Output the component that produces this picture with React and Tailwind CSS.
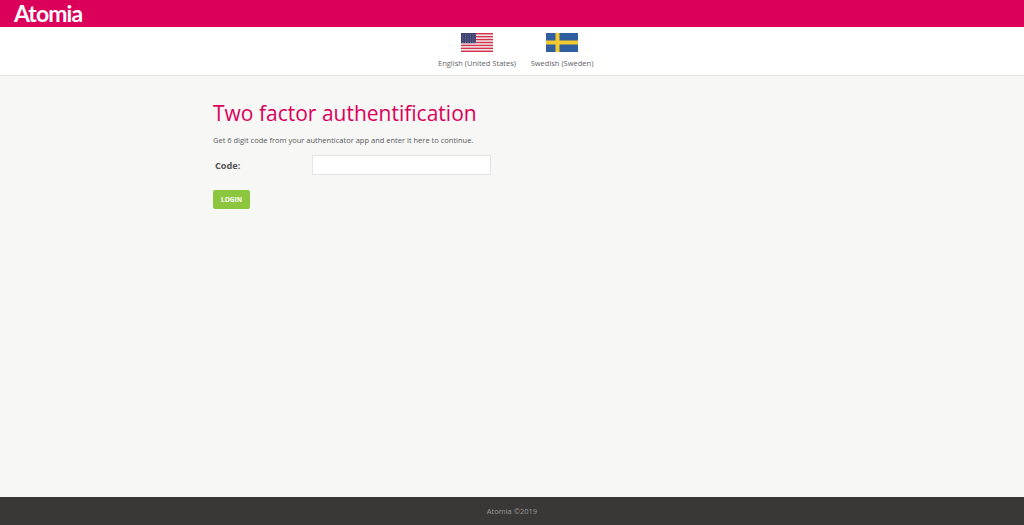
const sans = { fontFamily: '"Open Sans", sans-serif' };

function UsFlag() {
  const stripes = [0, 2, 4, 6, 8, 10, 12];
  return (
    <svg width="32" height="19" viewBox="0 0 32 19" className="block">
      <rect width="32" height="19" fill="#f3f3f5" />
      {stripes.map((i) => (
        <rect key={i} y={(i * 19) / 13} width="32" height={19 / 13} fill="#d2324a" />
      ))}
      <rect width="15" height="10.2" fill="#3b3f6e" />
      {[1.5, 3.5, 5.5, 7.5, 9].map((y) =>
        [1.5, 4, 6.5, 9, 11.5, 13.7].map((x) => (
          <rect key={`${x}-${y}`} x={x} y={y} width="0.8" height="0.8" fill="#9ea1bd" />
        ))
      )}
    </svg>
  );
}

function SeFlag() {
  return (
    <svg width="32" height="19" viewBox="0 0 32 19" className="block">
      <rect width="32" height="19" fill="#2f5f9e" />
      <rect x="9.5" width="4" height="19" fill="#f4c92f" />
      <rect y="7.5" width="32" height="4" fill="#f4c92f" />
    </svg>
  );
}

export default function App() {
  return (
    <div className="h-[525px] flex flex-col bg-[#f7f7f6] text-[#555]" style={sans}>
      <header className="h-[27px] bg-[#db005a] pl-[14px] flex items-center">
        <span
          className="text-white text-[23px] font-bold leading-none tracking-[-0.9px]"
          style={{ fontFamily: '"Lato", sans-serif' }}
        >
          Atomia
        </span>
      </header>

      <nav className="h-[49px] bg-white border-b border-[#e6e6e6] flex justify-center gap-[15px] pt-[6px] pl-[7px]">
        <a className="flex flex-col items-center w-[78px] text-[7.5px] leading-[11px] text-[#5f6368] whitespace-nowrap">
          <UsFlag />
          <span className="mt-[6px]">English (United States)</span>
        </a>
        <a className="flex flex-col items-center w-[62px] text-[7.5px] leading-[11px] text-[#5f6368] whitespace-nowrap">
          <SeFlag />
          <span className="mt-[6px]">Swedish (Sweden)</span>
        </a>
      </nav>

      <main className="flex-1 pl-[213px] pt-[23px]">
        <h1 className="text-[21px] leading-[28px] text-[#db005a] font-normal">Two factor authentification</h1>
        <p className="mt-[7px] text-[7.5px] leading-[12px] text-[#5a5a5a]">
          Get 6 digit code from your authenticator app and enter it here to continue.
        </p>
        <div className="mt-[9px] flex items-center">
          <label className="w-[99px] pl-[2px] pt-[1px] text-[9.2px] font-bold text-[#555]">Code:</label>
          <input className="w-[179px] h-[20px] bg-white border border-[#e4e4e4] outline-none" />
        </div>
        <button className="mt-[15px] block w-[37px] h-[19px] rounded-[2px] bg-[#8cc63f] text-white text-[6.5px] font-bold">
          LOGIN
        </button>
      </main>

      <footer className="h-[28px] pt-[1px] bg-[#3a3836] flex items-center justify-center text-[7.5px] text-[#999]">
        Atomia ©2019
      </footer>
    </div>
  );
}
